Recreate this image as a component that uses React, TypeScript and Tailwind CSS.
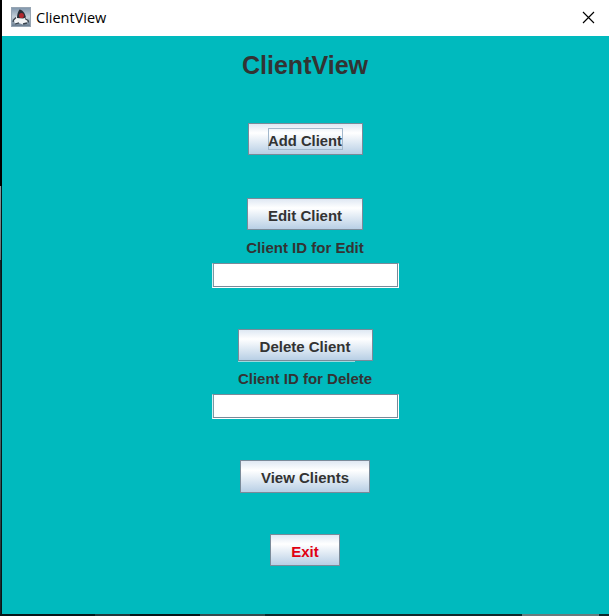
import type { ReactNode } from "react";

function SwingButton({ children, className = "" }: { children: ReactNode; className?: string }) {
  return (
    <button
      className={`flex shrink-0 items-center justify-center border border-[#7a8a99] bg-gradient-to-b from-[#dfe8f3] from-0% via-white via-30% to-[#b8cfe5] to-100% pt-[3px] text-[15px] leading-[18px] font-bold whitespace-nowrap ${className}`}
    >
      {children}
    </button>
  );
}

function SwingField({ label, className = "" }: { label: string; className?: string }) {
  return (
    <input
      aria-label={label}
      className={`block h-[25px] w-[187px] shrink-0 border border-t-[#7a8a99] border-r-white border-b-white border-l-[#d5eef0] bg-white shadow-[inset_-1px_-1px_0_#7a8a99,inset_1px_0_0_#7a9aa5] outline-none ${className}`}
    />
  );
}

function DukeIcon() {
  return (
    <svg width="20" height="20" viewBox="0 0 20 20" className="mt-px shrink-0">
      <defs>
        <linearGradient id="tile" x1="0" y1="0" x2="0" y2="1">
          <stop offset="0" stopColor="#7f95ab" />
          <stop offset=".5" stopColor="#c3ced8" />
          <stop offset="1" stopColor="#66798c" />
        </linearGradient>
      </defs>
      <rect x=".5" y=".5" width="19" height="19" fill="url(#tile)" stroke="#97a5b3" />
      <path d="M6 9 3 13l1 4 4-1 4 1.5 4-1.5 1-3-4-5z" fill="#f4f5f6" />
      <path d="M8.5 2.5c3 .5 5.5 3.5 6.5 8l-3 1-6-.5C6 7.5 7 4.5 8.5 2.5z" fill="#2a2d35" />
      <ellipse cx="10.5" cy="8.5" rx="2.4" ry="2.6" fill="#b3282f" />
      <path d="M5 10.5 2.5 13 2 15m12-3.5 3 2 .5 2M4 17l4-1.2M12 17l4-1" fill="none" stroke="#39434e" strokeWidth="1.3" />
    </svg>
  );
}

export default function App() {
  return (
    <div className="flex h-[616px] w-[609px] flex-col overflow-hidden bg-[#07191b] font-['Liberation_Sans',Arial,sans-serif] text-[#333333]">
      <div className="flex min-h-0 flex-1">
        <div className="flex w-0.5 shrink-0 flex-col bg-[#071719]">
          <div className="h-[186px] bg-black" />
          <div className="h-[74px] w-px bg-gradient-to-b from-[#87999d] to-[#657276]" />
          <div className="h-[354px] w-px bg-gradient-to-b from-[#142326] via-[#4d6266] to-[#172225]" />
        </div>
        <main className="flex flex-1 flex-col bg-[#00babe]">
          <header className="flex h-9 shrink-0 items-start bg-white pt-[6px] pr-[14px] pl-[9px]">
            <DukeIcon />
            <span className="ml-[5px] font-['Open_Sans','Noto_Sans',sans-serif] text-[14.5px] leading-[23px] text-black">ClientView</span>
            <svg width="13" height="13" viewBox="0 0 13 13" className="mt-[5px] ml-auto">
              <path d="m1 1 11 11M12 1 1 12" fill="none" stroke="black" strokeWidth="1.15" />
            </svg>
          </header>
          <section className="flex flex-col items-center pr-px">
            <h1 className="mt-[14px] text-[25px] leading-[30px] font-bold">ClientView</h1>
            <SwingButton className="mt-[43px] h-[32px] w-[115px]">
              <span className="-mt-[3px] flex h-[22px] w-[75px] items-center justify-center border border-[#a3b8cc] pt-[4px] text-[14.8px]">Add Client</span>
            </SwingButton>
            <SwingButton className="mt-[43px] h-[32px] w-[116px]">Edit Client</SwingButton>
            <label className="mt-[9px] text-[15px] leading-[18px] font-bold">Client ID for Edit</label>
            <SwingField label="Client ID for Edit" className="mt-[6px]" />
            <SwingButton className="mt-[41px] h-[32px] w-[135px]">Delete Client</SwingButton>
            <div className="mr-[18px] h-px w-[117px] bg-[#9ed9dd]" />
            <label className="mt-[8px] text-[15px] leading-[18px] font-bold">Client ID for Delete</label>
            <SwingField label="Client ID for Delete" className="mt-[6px]" />
            <SwingButton className="mt-[41px] h-[33px] w-[130px]">View Clients</SwingButton>
            <SwingButton className="mt-[41px] h-[32px] w-[70px] text-[#e00012]">Exit</SwingButton>
          </section>
        </main>
      </div>
      <div className="flex h-0.5 shrink-0">
        <div className="w-[95px] bg-[#061719]" />
        <div className="w-[35px] bg-[#20383a]" />
        <div className="w-[70px] bg-[#061719]" />
        <div className="w-[65px] bg-[#344b4d]" />
        <div className="w-[257px] bg-[#10292b]" />
        <div className="w-[77px] bg-[#687b7d]" />
        <div className="flex-1 bg-[#10292b]" />
      </div>
    </div>
  );
}
